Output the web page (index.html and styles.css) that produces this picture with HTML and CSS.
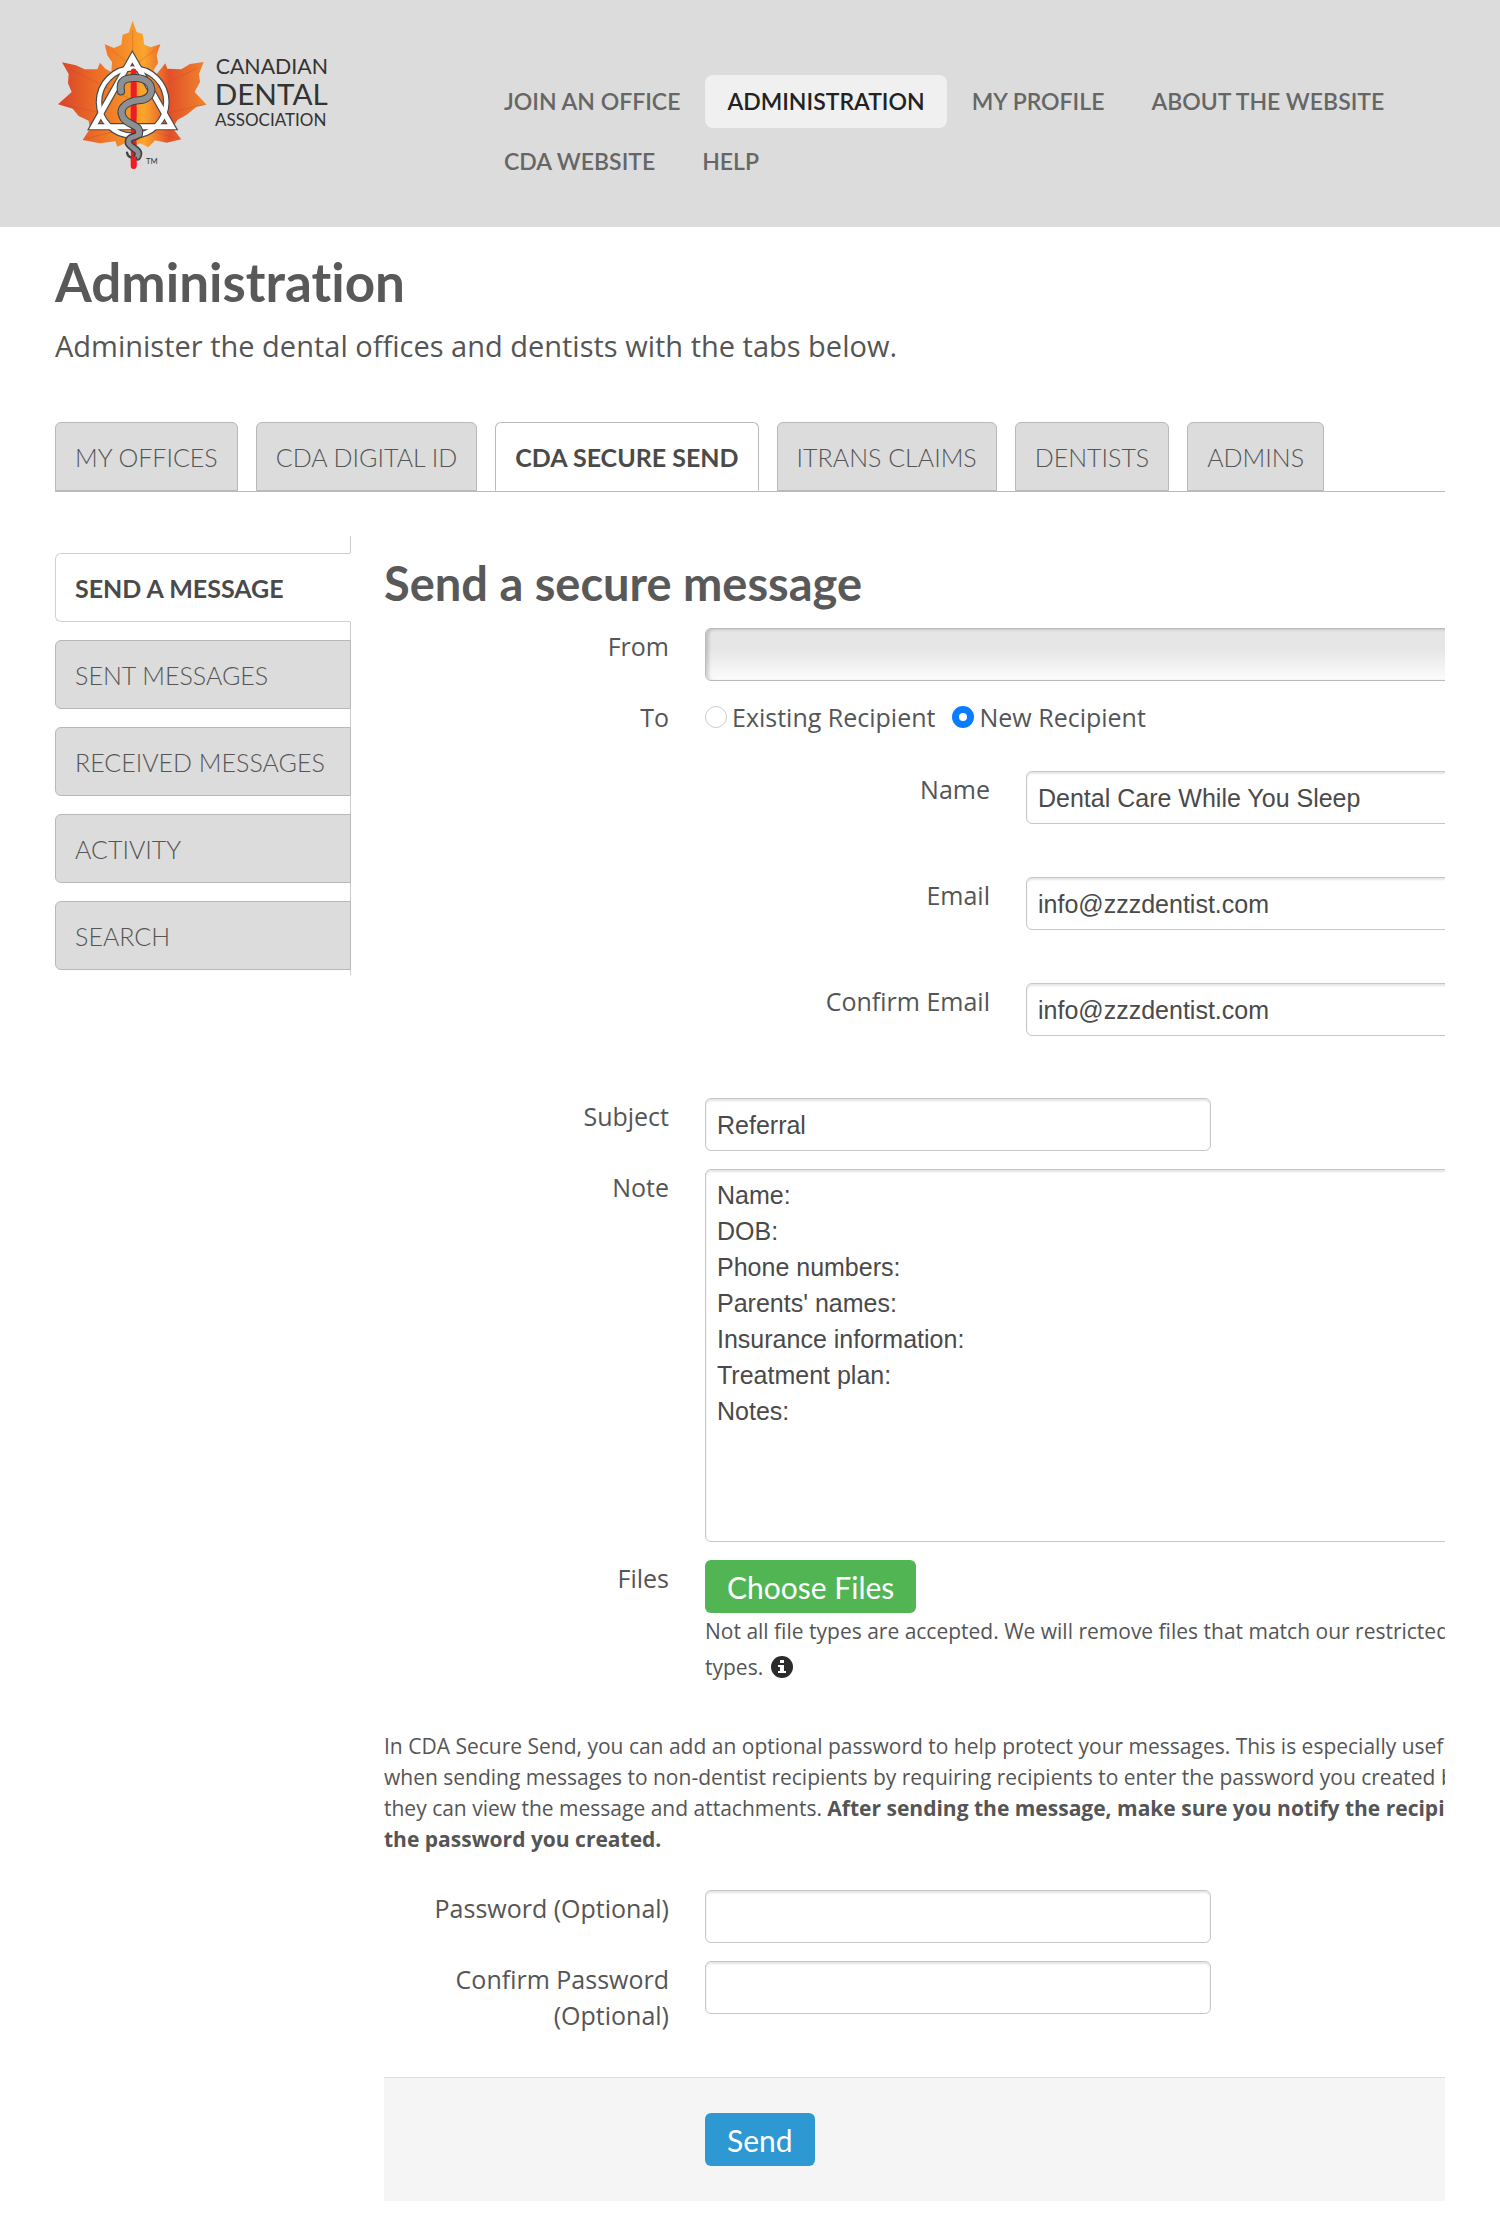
FILE: index.html
```html
<!DOCTYPE html>
<html lang="en">
<head>
  <meta charset="UTF-8" />
  <meta name="viewport" content="width=device-width, initial-scale=1.0"/>
  <title>Administration - CDA Secure Send</title>
  <link rel="stylesheet" href="styles.css">
</head>
<body>

<header class="site-header">
  <a href="#" class="logo" aria-label="Canadian Dental Association">
    <svg viewBox="42 45 870 480" role="img">
      <defs>
        <linearGradient id="leaf" x1="0" y1="0" x2="1" y2="0">
          <stop offset="0" stop-color="#d8432a"/>
          <stop offset="0.3" stop-color="#ee7426"/>
          <stop offset="0.58" stop-color="#fba52c"/>
          <stop offset="0.75" stop-color="#e2502a"/>
          <stop offset="1" stop-color="#f0862c"/>
        </linearGradient>
      </defs>
      <!-- leaf -->
      <path fill="url(#leaf)" d="M278 62 L290 96 L308 102 L313 134 L332 142 L361 133 L350 165 L354 188 L340 212 L350 222 L376 190 L382 206 L424 208 L450 192 L491 186 L477 222 L480 246 L464 276 L500 314 L470 320 L440 344 L412 360 L398 384 L424 418 L380 428 L345 421 L325 442 L300 430 L278 440 L255 430 L232 440 L226 424 L180 430 L128 420 L150 386 L146 362 L116 348 L98 326 L54 313 L95 276 L84 250 L86 222 L66 187 L108 196 L134 208 L172 208 L180 188 L196 206 L214 216 L216 186 L202 166 L194 133 L222 144 L244 134 L248 104 L266 98 Z"/>
      <g fill="none" stroke="#c9432a" stroke-width="2" opacity="0.5">
        <path d="M278 90 V420 M278 300 L90 208 M278 300 L470 205 M190 340 L70 314 M360 345 L490 314 M278 200 L215 150 M278 200 L345 150 M240 390 L140 416 M320 390 L412 415"/>
      </g>
      <!-- ring and triangle -->
      <circle cx="278" cy="306" r="101" fill="none" stroke="#4a4a4a" stroke-width="20"/>
      <path d="M277 172 L396 380 L160 380 Z" fill="none" stroke="#4a4a4a" stroke-width="22"/>
      <circle cx="278" cy="306" r="101" fill="none" stroke="#fff" stroke-width="13"/>
      <path d="M277 172 L396 380 L160 380 Z" fill="none" stroke="#fff" stroke-width="15"/>
      <!-- staff and serpent -->
      <path d="M281 214 V498" stroke="#ee1c23" stroke-width="17" stroke-linecap="round"/>
      <g fill="none" stroke-linecap="round" stroke-linejoin="round">
        <path d="M243 274 C236 240 258 232 290 234 C344 236 348 294 304 300 C264 302 232 322 250 354 C266 378 302 372 297 402 C290 414 262 406 266 430 C276 448 304 450 292 470" stroke="#3f4143" stroke-width="24"/>
        <path d="M243 274 C236 240 258 232 290 234 C344 236 348 294 304 300 C264 302 232 322 250 354 C266 378 302 372 297 402" stroke="#8d9092" stroke-width="18"/>
        <path d="M297 402 C290 414 262 406 266 430 C276 448 304 450 292 470" stroke="#8d9092" stroke-width="14"/>
        <path d="M261 458 Q264 476 288 474" stroke="#3f4143" stroke-width="7"/>
      </g>
      <path d="M281 255 V285 M281 325 V352 M281 478 V498" stroke="#ee1c23" stroke-width="17" stroke-linecap="round"/>
      <g class="logo-text">
        <text x="527" y="222" font-size="64">CANADIAN</text>
        <text x="524" y="314" font-size="89">DENTAL</text>
        <text x="525" y="378" font-size="51">ASSOCIATION</text>
        <text x="318" y="493" font-size="23">TM</text>
      </g>
    </svg>
  </a>
  <nav class="main-nav">
    <a href="#">JOIN AN OFFICE</a>
    <a href="#" class="active">ADMINISTRATION</a>
    <a href="#">MY PROFILE</a>
    <a href="#">ABOUT THE WEBSITE</a>
    <a href="#">CDA WEBSITE</a>
    <a href="#">HELP</a>
  </nav>
</header>

<div class="page">
  <h1>Administration</h1>
  <p class="lead">Administer the dental offices and dentists with the tabs below.</p>

  <nav class="tabs">
    <a href="#">MY OFFICES</a>
    <a href="#">CDA DIGITAL ID</a>
    <a href="#" class="active">CDA SECURE SEND</a>
    <a href="#">ITRANS CLAIMS</a>
    <a href="#">DENTISTS</a>
    <a href="#">ADMINS</a>
  </nav>

  <div class="columns">
    <nav class="side-tabs">
      <a href="#" class="active">SEND A MESSAGE</a>
      <a href="#">SENT MESSAGES</a>
      <a href="#">RECEIVED MESSAGES</a>
      <a href="#">ACTIVITY</a>
      <a href="#">SEARCH</a>
    </nav>

    <main class="content">
      <form class="message-form">
        <h2>Send a secure message</h2>

        <div class="form-row">
          <label for="from">From</label>
          <input type="text" id="from" class="from" disabled />
        </div>

        <div class="form-row">
          <span class="row-label">To</span>
          <div class="radios">
            <input type="radio" name="recipient" id="existing" />
            <label for="existing">Existing Recipient</label>
            <input type="radio" name="recipient" id="new" checked />
            <label for="new">New Recipient</label>
          </div>
        </div>

        <!-- New recipient -->
        <div class="recipient">
          <div class="form-row">
            <label for="name">Name</label>
            <input type="text" id="name" value="Dental Care While You Sleep" />
          </div>
          <div class="form-row">
            <label for="email">Email</label>
            <input type="text" id="email" value="info@zzzdentist.com" />
          </div>
          <div class="form-row">
            <label for="confirm-email">Confirm Email</label>
            <input type="text" id="confirm-email" value="info@zzzdentist.com" />
          </div>
        </div>

        <div class="form-row">
          <label for="subject">Subject</label>
          <input type="text" id="subject" class="short" value="Referral" />
        </div>

        <div class="form-row">
          <label for="note">Note</label>
          <textarea id="note">Name:
DOB:
Phone numbers:
Parents' names:
Insurance information:
Treatment plan:
Notes:</textarea>
        </div>

        <div class="form-row">
          <span class="row-label">Files</span>
          <div class="files">
            <button type="button" class="btn btn-green">Choose Files</button>
            <p class="hint">Not all file types are accepted. We will remove files that match our restricted file types.
              <svg class="info" viewBox="0 0 22 22"><circle cx="11" cy="11" r="11" fill="#2b2b2b"/><path d="M9 4h4v3H9zM7 9h6v6h2v2H7v-2h2v-4H7z" fill="#fff"/></svg></p>
          </div>
        </div>

        <p class="note">In CDA Secure Send, you can add an optional password to help protect your messages. This is especially useful<br>
          when sending messages to non-dentist recipients by requiring recipients to enter the password you created before<br>
          they can view the message and attachments. <strong>After sending the message, make sure you notify the recipient of<br>
          the password you created.</strong></p>

        <div class="form-row">
          <label for="password">Password (Optional)</label>
          <input type="password" id="password" class="short" />
        </div>
        <div class="form-row">
          <label for="confirm-password">Confirm Password (Optional)</label>
          <input type="password" id="confirm-password" class="short" />
        </div>

        <div class="form-actions">
          <button type="submit" class="btn btn-blue">Send</button>
        </div>
      </form>
    </main>
  </div>
</div>

</body>
</html>
```
FILE: styles.css
```css
* {
  box-sizing: border-box;
}

body {
  margin: 0;
  font-family: "Open Sans", sans-serif;
  font-size: 25px;
  line-height: 36px;
  color: #555;
  background: #fff;
}

a {
  text-decoration: none;
  color: inherit;
}

h1, h2, p {
  margin: 0;
}

h1, h2 {
  font-family: Lato, sans-serif;
  font-weight: bold;
  font-variant-ligatures: none;
  color: #595959;
}

/* Header */
.site-header {
  display: flex;
  justify-content: space-between;
  min-height: 227px;
  padding: 15px 54px;
  background: #dcdcdc;
}

.logo svg {
  display: block;
  width: 290px;
  height: 160px;
}

.logo-text {
  font-family: Lato, sans-serif;
  fill: #333;
}

.main-nav {
  display: flex;
  flex-wrap: wrap;
  align-content: flex-start;
  gap: 7px 3px;
  width: 964px;
  padding-top: 60px;
}

.main-nav a {
  padding: 0 22px;
  font-family: Lato, sans-serif;
  font-size: 23px;
  font-weight: 600;
  line-height: 53px;
  color: #666;
  border-radius: 8px;
}

.main-nav .active {
  background: #f0f0f0;
  color: #222;
}

.page {
  padding: 23px 55px 13px;
}

h1 {
  font-size: 53px;
  line-height: 64px;
}

.lead {
  margin-top: 12px;
  font-size: 29px;
  line-height: 40px;
}

/* Tabs */
.tabs {
  display: flex;
  gap: 18px;
  margin-top: 56px;
  border-bottom: 1px solid #bbb;
}

.tabs a,
.side-tabs a {
  padding: 2px 19px 0;
  font-family: Lato, sans-serif;
  font-size: 25px;
  font-weight: 300;
  line-height: 65px;
  background: #dcdcdc;
  border: 1px solid #b8b8b8;
}

.tabs a {
  border-radius: 6px 6px 0 0;
}

.tabs .active,
.side-tabs .active {
  font-weight: bold;
  color: #4a4a4a;
  background: #fff;
}

.tabs .active {
  border-bottom-color: #fff;
}

.columns {
  display: flex;
  align-items: flex-start;
  gap: 33px;
  margin-top: 44px;
}

.side-tabs {
  display: flex;
  flex-direction: column;
  gap: 18px;
  flex: none;
  width: 296px;
  padding: 17px 0 5px;
  border-right: 1px solid #ccc;
}

.side-tabs a {
  margin-right: -1px;
  border-radius: 6px 0 0 6px;
}

.side-tabs .active {
  border-color: #d0d0d0;
  border-right-color: #fff;
}

/* Form */
.content {
  flex: 1;
  min-width: 0;
  overflow: hidden;
}

.message-form {
  display: flex;
  flex-direction: column;
}

h2 {
  margin: 17px 0 15px;
  font-size: 47px;
  line-height: 60px;
}

.form-row {
  display: flex;
  align-items: flex-start;
  gap: 36px;
  width: 109%;
  margin-bottom: 18px;
}

.form-row > label,
.row-label {
  flex: none;
  width: 285px;
  text-align: right;
}

input[type="text"],
input[type="password"],
textarea {
  flex: 1;
  min-width: 0;
  height: 53px;
  padding: 10px 11px 8px;
  font-family: "Liberation Sans", sans-serif;
  font-size: 25px;
  line-height: 36px;
  color: #4a4a4a;
  background: #fff;
  border: 1px solid #c6c6c6;
  border-radius: 6px;
  box-shadow: inset 0 2px 2px rgba(0, 0, 0, 0.1);
}

input.short {
  flex: none;
  width: 506px;
}

input.from {
  background: linear-gradient(#e6e6e6 40%, #fcfcfc);
  border-color: #bbb;
  box-shadow: inset 3px 1px 3px rgba(0, 0, 0, 0.15);
}

textarea {
  height: 373px;
  padding-top: 7px;
  overflow: hidden;
  resize: none;
}

.radios {
  display: flex;
  align-items: center;
  gap: 5px;
}

.radios label {
  margin-right: 12px;
}

.radios input {
  appearance: none;
  width: 22px;
  height: 22px;
  margin: 0;
  border: 1px solid #ccc;
  border-radius: 50%;
}

.radios input:checked {
  border: 7px solid #0a7cff;
}

.recipient {
  margin: 18px 0 9px 321px;
  width: 79%;
}

.recipient .form-row {
  margin-bottom: 53px;
}

.btn {
  height: 53px;
  padding: 0 22px;
  font-family: Lato, sans-serif;
  font-size: 30px;
  color: #fff;
  border: none;
  border-radius: 6px;
}

.btn-green {
  background: #51b554;
}

.btn-blue {
  background: #2d98d1;
}

.files {
  flex: 1;
}

.files .btn {
  display: block;
}

.hint {
  font-size: 21px;
}

.info {
  width: 22px;
  height: 22px;
  margin-left: 2px;
  vertical-align: -3px;
}

.note {
  width: 109%;
  margin: 28px 0 35px;
  font-size: 21px;
  line-height: 31px;
}

.form-actions {
  margin-top: 26px;
  padding: 35px 0 35px 321px;
  background: #f5f5f5;
  border-top: 1px solid #ddd;
}
```
